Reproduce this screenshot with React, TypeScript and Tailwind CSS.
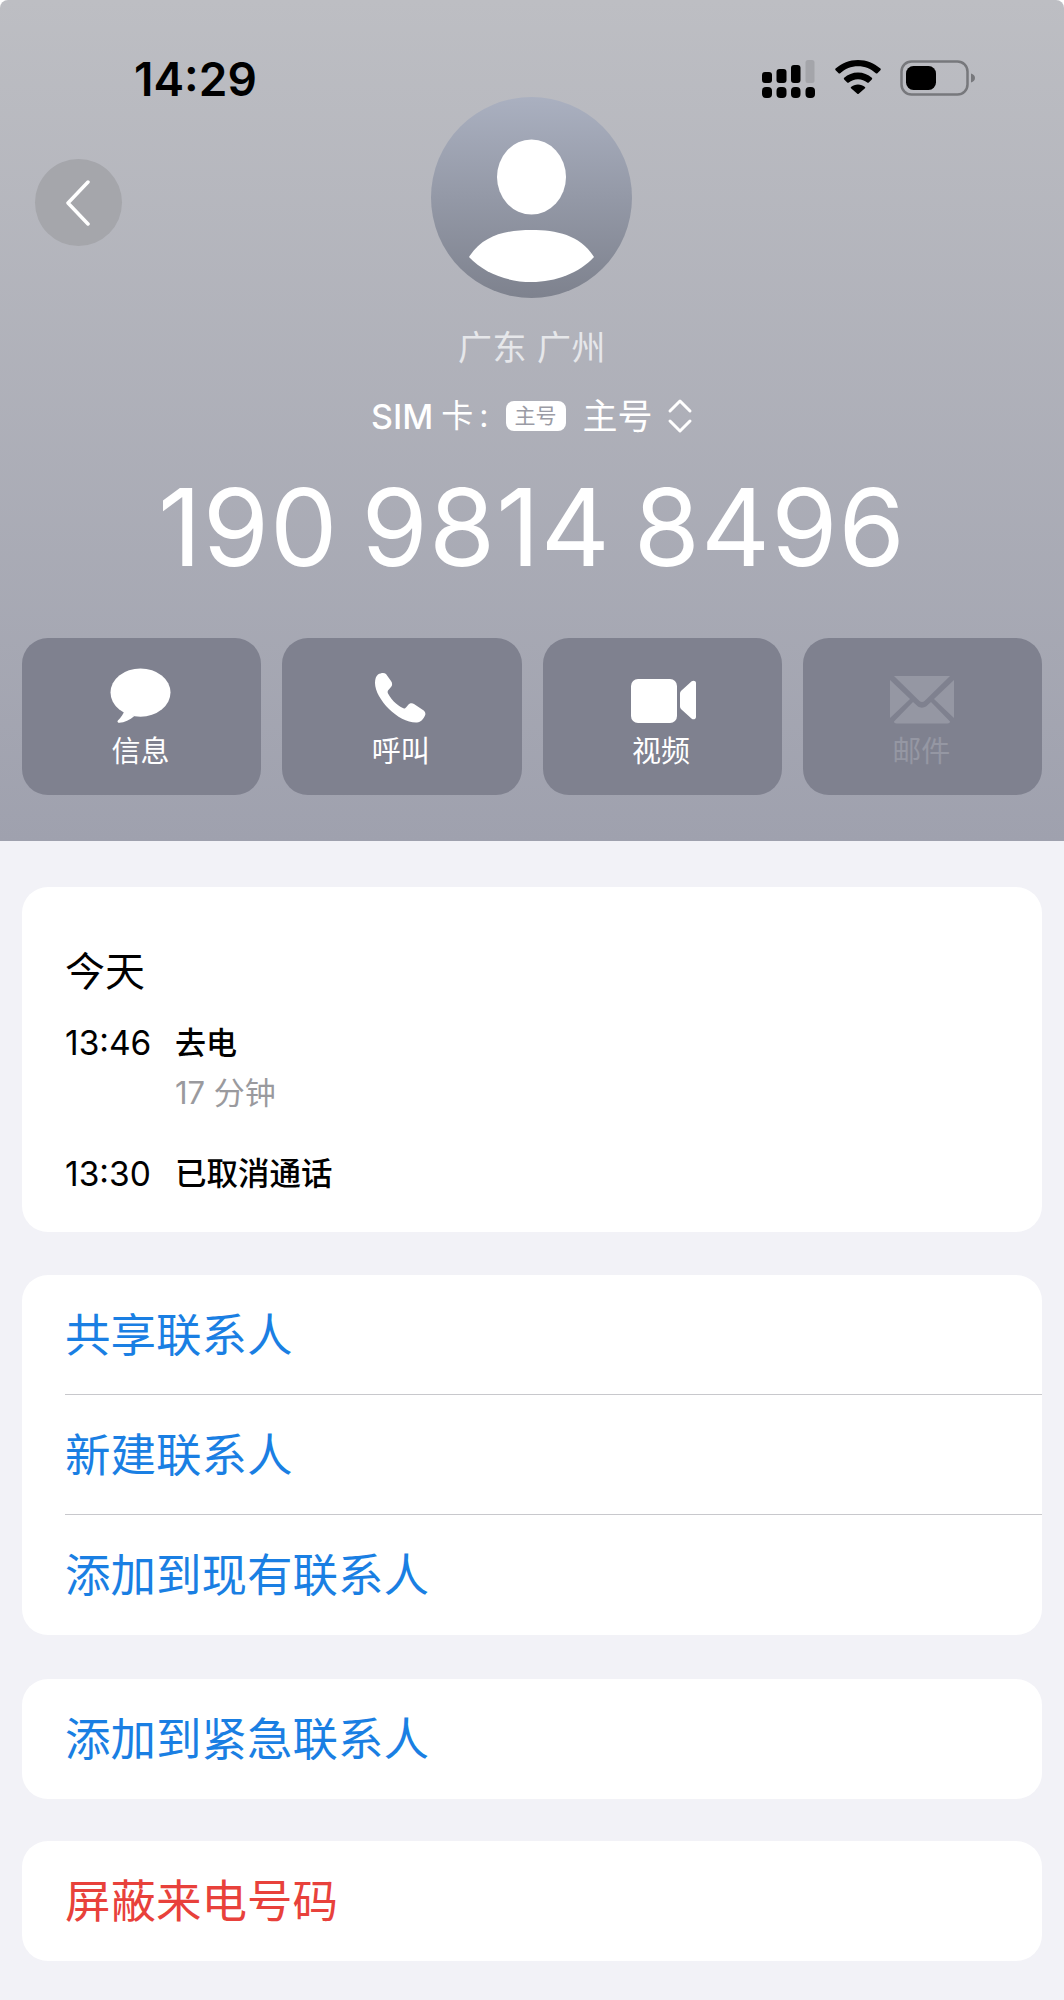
import React from "react";

const CJK = "font-['Inter','Noto_Sans_CJK_SC',sans-serif]";

function Signal() {
  return (
    <svg width="54" height="38" viewBox="0 0 54 38" className="block">
      <rect x="0" y="12" width="10" height="11" rx="3" fill="#000" />
      <rect x="14.500" y="9" width="10" height="14" rx="3" fill="#000" />
      <rect x="29" y="5" width="9.500" height="18" rx="3" fill="#000" />
      <rect x="43.500" y="0" width="9" height="23" rx="2.500" fill="#a4a5aa" />
      <rect x="0" y="27" width="10" height="11" rx="4" fill="#000" />
      <rect x="14.500" y="27" width="10" height="11" rx="4" fill="#000" />
      <rect x="29" y="27" width="9.500" height="11" rx="4" fill="#000" />
      <rect x="43.500" y="27" width="9.500" height="11" rx="4" fill="#000" />
    </svg>
  );
}

function Wifi() {
  return (
    <svg width="46" height="34" viewBox="0 0 46 34" className="block">
      <path d="M23 0C14.500 0 6.600 3.200 0.600 8.600c-.5.400-.5 1.100 0 1.600l3 3c.4.500 1.100.500 1.600.1C10 8.900 16.200 6.300 23 6.300s13 2.600 17.800 7c.5.400 1.200.400 1.600-.1l3-3c.5-.5.500-1.200 0-1.600C39.400 3.200 31.500 0 23 0Z" fill="#000" />
      <path d="M23 12.500c-5.300 0-10.100 2-13.800 5.300-.5.400-.5 1.200 0 1.600l3 3c.4.500 1.100.500 1.600.1 2.400-2 5.600-3.300 9.200-3.300s6.800 1.300 9.200 3.300c.5.400 1.200.400 1.600-.1l3-3c.5-.4.500-1.200 0-1.600-3.700-3.300-8.500-5.300-13.800-5.300Z" fill="#000" />
      <path d="M23 24.500c-2.700 0-5.100 1-7 2.600-.3.300-.3.800 0 1.100l6.300 5.500c.4.400 1 .4 1.400 0l6.300-5.500c.3-.3.3-.8 0-1.100-1.900-1.600-4.300-2.600-7-2.600Z" fill="#000" />
    </svg>
  );
}

function Battery() {
  return (
    <svg width="76" height="36" viewBox="0 0 76 36" className="block">
      <rect x="1.500" y="1.500" width="66" height="33" rx="10" fill="none" stroke="#77787c" strokeWidth="2.500" />
      <rect x="6" y="6" width="30" height="24" rx="7.500" fill="#000" />
      <path d="M71 13.500c2.500.6 4 2.300 4 4.500s-1.500 3.900-4 4.500Z" fill="#77787c" />
    </svg>
  );
}

function Bubble() {
  return (
    <svg width="61" height="56" viewBox="0 0 62 56" className="block mr-[2px]">
      <ellipse cx="31" cy="24.500" rx="30.500" ry="24.500" fill="#fff" />
      <path d="M15 42c-1 4-4 8-7 11-1 1.300 0 2.500 1.500 2.300 5-.6 11-3.300 15-6.800Z" fill="#fff" />
    </svg>
  );
}

function Phone() {
  return (
    <svg width="51" height="51" viewBox="0 0 51 51" className="block mr-[2px]">
      <path d="M3 1.500C6 0 9-.5 11 1l5 7c1.500 2 1.500 4.500 0 6l-3 3.500c-.5 1-.5 2 0 3 2 3.500 5 7.500 8 10s6 4.500 8 5c1 0 1.500-.5 2-1l2.500-3c1.500-1.500 4-1.500 5.500-.5l9 6c2 1.500 3 3.500 2 5.500-1.500 3.500-4 6.500-8 7-9 .5-20-5.500-28-13.500S0 18 0 10c0-4 1-7 3-8.500Z" fill="#fff" />
    </svg>
  );
}

function Video() {
  return (
    <svg width="66" height="46" viewBox="0 0 66 46" className="block ml-[4px]">
      <rect x="0" y="1" width="46" height="44" rx="7" fill="#fff" />
      <path d="M49 15.500c0-1 .4-2 1.200-2.700l10.500-9.500c1.500-1.300 4.300-.6 4.300 1.700v34c0 2.300-2.800 3-4.300 1.700l-10.500-9.500c-.8-.7-1.200-1.700-1.200-2.700Z" fill="#fff" />
    </svg>
  );
}

function Mail() {
  return (
    <svg width="66" height="48" viewBox="0 0 66 48" className="block">
      <path d="M5 0h56L35.500 25c-1.500 1.300-3.500 1.300-5 0Z" fill="#9597a3" />
      <path d="M1 4l20 19L1 42Z" fill="#9597a3" />
      <path d="M65 4 45 23l20 19Z" fill="#9597a3" />
      <path d="M24 26l5 4.500c2 1.500 5.700 1.500 8 0l5-4.500 19 19.500c0 1-1 2-2.500 2h-51C6 47.500 5 46.500 5 45.500Z" fill="#9597a3" />
    </svg>
  );
}

function ActionButton({ icon, label, dim }: { icon: React.ReactNode; label: string; dim?: boolean }) {
  return (
    <div className="h-[157px] rounded-[26px] bg-[#7f818f] flex flex-col items-center">
      <div className="h-[92px] w-full flex items-end justify-center pb-[6px]">{icon}</div>
      <div className={`text-[29px] leading-[40px] mt-[2px] mr-[2px] ${dim ? "text-[#9597a3]" : "text-white"}`}>{label}</div>
    </div>
  );
}

function Row({ label, color, sep }: { label: string; color: string; sep?: boolean }) {
  return (
    <div className="h-[120px] pl-[43px] pt-[3px] relative flex items-center">
      <span className={`text-[45.500px] ${color}`}>{label}</span>
      {sep ? <div className="absolute left-[43px] right-0 bottom-0 h-[1px] bg-[#c8c8cc]" /> : null}
    </div>
  );
}

export default function App() {
  return (
    <div className={`w-[1064px] h-[2000px] bg-[#f2f2f7] overflow-hidden ${CJK}`}>
      <div className="bg-white">
        <div className="relative h-[841px] rounded-t-[8px] bg-gradient-to-b from-[#bdbec3] to-[#9fa1ae]">
          {/* status bar */}
          <div className="h-[97px] relative flex items-start justify-between pl-[134px] pr-[88px] pt-[52px]">
            <div className="text-[46px] leading-[54px] font-semibold text-black">14:29</div>
            <div className="flex items-start gap-[19px] pt-[8px]">
              <Signal />
              <Wifi />
              <Battery />
            </div>
          </div>

          {/* back */}
          <div className="absolute left-[35px] top-[159px] w-[87px] h-[87px] rounded-full bg-[#a5a6ab] flex items-center justify-center">
            <svg width="26" height="46" viewBox="0 0 26 46" fill="none" className="block mr-[2px]">
              <path d="M23 2 3 23l20 21" stroke="#fff" strokeWidth="3.500" strokeLinecap="round" strokeLinejoin="round" />
            </svg>
          </div>

          {/* avatar */}
          <div className="flex justify-center pr-[2px]">
            <div className="w-[201px] h-[201px] rounded-full overflow-hidden bg-gradient-to-b from-[#aab0c0] to-[#7e828e]">
              <svg width="201" height="201" viewBox="0 0 201 201" className="block">
                <ellipse cx="100.500" cy="80" rx="34.500" ry="37.500" fill="#fff" />
                <path d="M38 160c14-22 37-27 62.500-27s48.500 5 62.500 27c-15 16-38 25-62.500 25S53 176 38 160Z" fill="#fff" />
              </svg>
            </div>
          </div>

          <div className="mt-[27px] text-center text-[34px] leading-[46px] tracking-[0.5px] text-[#e6e7ea]">广东 广州</div>

          <div className="mt-[22px] h-[46px] flex items-center pl-[371px] text-white">
            <span className="text-[34px] font-medium text-white">SIM</span>
            <span className="ml-[8px] text-[32px] text-white">卡</span>
            <span className="ml-[6px] text-[32px] text-white">:</span>
            <span className="ml-[17px] h-[30px] w-[60px] rounded-[8px] bg-white text-[#9a9ba5] text-[21px] leading-[30px] text-center">主号</span>
            <span className="ml-[17px] text-[35px]">主号</span>
            <svg width="26" height="36" viewBox="0 0 26 36" fill="none" className="block ml-[14px]">
              <path d="M3 13 13 3l10 10M3 23l10 10 10-10" stroke="#fff" strokeWidth="3" strokeLinecap="round" strokeLinejoin="round" />
            </svg>
          </div>

          <div className="mt-[25px] mb-[48px] text-center text-[107px] leading-[126px] font-[380] tracking-[1px] [word-spacing:-8px] text-white">190 9814 8496</div>

          <div className="px-[22px] grid grid-cols-4 gap-[21px]">
            <ActionButton icon={<Bubble />} label="信息" />
            <ActionButton icon={<Phone />} label="呼叫" />
            <ActionButton icon={<Video />} label="视频" />
            <ActionButton icon={<Mail />} label="邮件" dim />
          </div>
        </div>
      </div>

      <div className="px-[22px] pt-[46px] flex flex-col">
        <div className="h-[345px] rounded-[26px] bg-white pl-[43px] pt-[61px]">
          <div className="text-[40px] leading-[48px] text-black">今天</div>
          <div className="mt-[25px] flex">
            <div className="w-[110px] text-[33.500px] leading-[44px] text-black">13:46</div>
            <div>
              <div className="text-[31px] leading-[44px] font-medium text-black">去电</div>
              <div className="mt-[6px] text-[31px] leading-[44px] text-[#9a9a9e]">17 分钟</div>
            </div>
          </div>
          <div className="mt-[37px] flex">
            <div className="w-[110px] text-[33.500px] leading-[44px] text-black">13:30</div>
            <div className="text-[31.500px] leading-[44px] font-medium text-black">已取消通话</div>
          </div>
        </div>

        <div className="mt-[43px] rounded-[26px] bg-white overflow-hidden">
          <Row label="共享联系人" color="text-[#1a7fe3]" sep />
          <Row label="新建联系人" color="text-[#1a7fe3]" sep />
          <Row label="添加到现有联系人" color="text-[#1a7fe3]" />
        </div>

        <div className="mt-[44px] rounded-[26px] bg-white overflow-hidden">
          <Row label="添加到紧急联系人" color="text-[#1a7fe3]" />
        </div>

        <div className="mt-[42px] rounded-[26px] bg-white overflow-hidden">
          <Row label="屏蔽来电号码" color="text-[#e8413b]" />
        </div>
      </div>
    </div>
  );
}
